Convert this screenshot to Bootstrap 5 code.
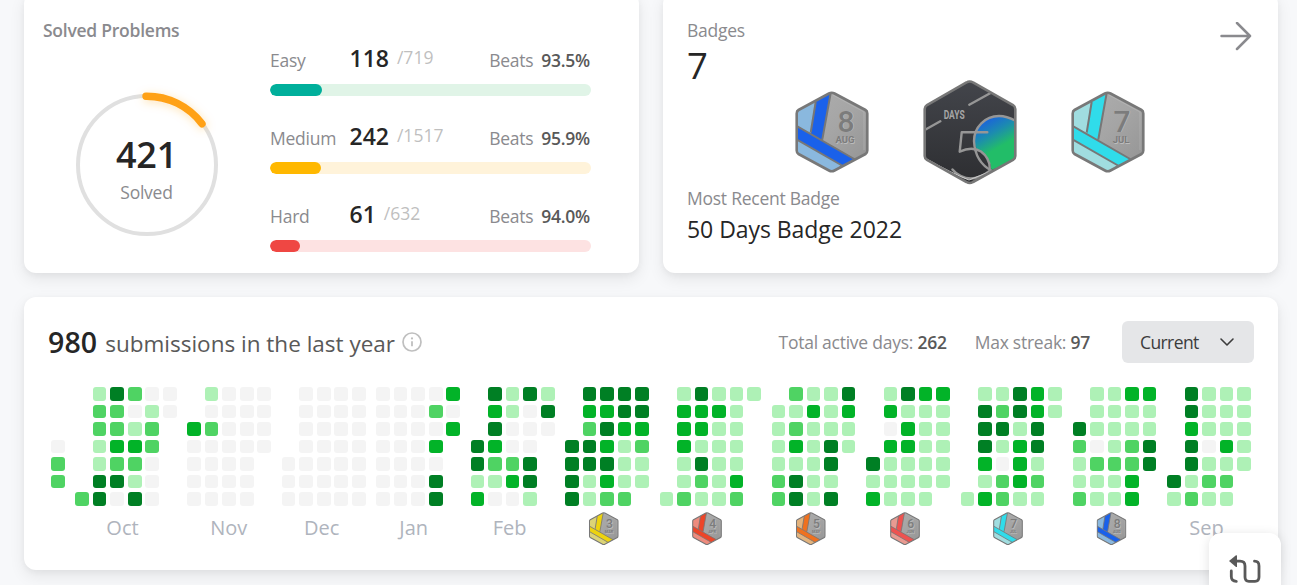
<!DOCTYPE html>
<html lang="en">
<head>
<meta charset="utf-8">
<meta name="viewport" content="width=device-width, initial-scale=1">
<title>Profile</title>
<link href="https://cdn.jsdelivr.net/npm/bootstrap@5.3.0/dist/css/bootstrap.min.css" rel="stylesheet">
<style>
body{background:#f7f8fa;font-family:"Open Sans","Noto Sans",sans-serif;color:#262626;overflow:hidden;height:585px}
main{margin-top:-8px;padding:0 19px 0 24px}
.panel{background:#fff;border:0;border-radius:12px;box-shadow:0 2px 6px rgba(0,0,0,.04),0 6px 16px rgba(0,0,0,.08)}
.top-row{grid-template-columns:1fr 1fr}
.top-panel{height:281px;min-width:0}
.muted{color:#8a8a8e}
.t18{font-size:17.5px;line-height:24px;letter-spacing:-.25px}
.solved{padding:26px 48px 0 19px}
.ring-box{width:144px;height:144px;margin:51px 0 0 32px}
.ring-text{inset:0;padding-top:40px;text-align:center}
.ring-num{font-size:36px;line-height:44px;font-weight:600;letter-spacing:-.2px;margin-left:-1px}
.ring-caption{margin:3px 0 0 -1px}
.levels{width:321px;padding-top:22px}
.level{margin-bottom:22px}
.level-head{height:36px;line-height:36px;margin-bottom:8px;padding-right:1px;font-size:17.5px;letter-spacing:-.25px}
.level-name{width:79.5px}
.level-num{font-size:23px;font-weight:600;letter-spacing:0;color:#262626}
.level-total{color:#bfbfbf;font-weight:500;margin-left:8px;letter-spacing:0;transform:translateY(-3px)}
.bar{height:12px;border-radius:6px}
.bar .progress-bar{border-radius:6px}
.strong-num{color:#595959;font-weight:600}
.badges{padding:26px 26px 0 24px}
.badge-count{font-size:36.5px;line-height:47px}
.medals{height:104px;margin:-9px 107px 2px 108px}
.recent{font-size:23px;line-height:38px;letter-spacing:-.05px}
.year{height:273px;margin-top:24px;padding:24px 24px 0}
.year-head{height:42px}
.year-num{font-size:28.5px;font-weight:600;letter-spacing:.1px}
.year-label{font-size:22.5px;color:#595959;margin-left:8px;position:relative;top:-1px}
.period{width:132px;height:42px;background:#e5e6e8;border:0;border-radius:6px;color:#3c3c3c;font-size:17.5px;letter-spacing:-.6px;padding:0 19px 0 18px}
.cal{margin:24px 0 0 3px;gap:10.65px}
.weeks{gap:3.92px}
.week{gap:3.92px}
.cell{width:13.65px;height:13.65px;border-radius:3px;flex:none}
.v0{background:#f4f4f4}.v1{background:#aef1b6}.v2{background:#4fd363}.v3{background:#02b328}.v4{background:#007f24}
.month-label{height:36px;margin-top:6px;font-size:20px;line-height:32px;color:#afb4bd;text-align:center}
.month-label svg{display:block;margin:1px auto 0}
.emboss{text-shadow:.8px .8px 0 #bcbcbc}
.fab{position:fixed;left:1209px;top:533px;width:72px;height:72px;border-radius:12px;background:#fff;box-shadow:0 2px 12px rgba(0,0,0,.12);padding:22px 0 0 20px}
</style>
</head>
<body>
<main>
  <div class="d-grid gap-4 top-row">
    <section class="card panel top-panel solved flex-row justify-content-between">
      <div class="flex-shrink-0">
        <div class="t18 muted fw-semibold">Solved Problems</div>
        <div class="ring-box position-relative">
          <svg width="144" height="144" viewBox="0 0 144 144" overflow="visible">
            <defs><filter id="glow" x="-50%" y="-50%" width="200%" height="200%"><feDropShadow dx="1" dy="2" stdDeviation="5" flood-color="#ffa116" flood-opacity=".3"/></filter></defs>
            <circle cx="72" cy="72" r="69" fill="none" stroke="#e0e0e0" stroke-width="4"/>
            <path d="M71 3.2A69 69 0 0 1 127 30.8" fill="none" stroke="#ffa116" stroke-width="7.4" stroke-linecap="round" filter="url(#glow)"/>
          </svg>
          <div class="ring-text position-absolute">
            <div class="ring-num">421</div>
            <div class="t18 muted ring-caption">Solved</div>
          </div>
        </div>
      </div>
      <div class="levels flex-shrink-0" id="levels"></div>
    </section>
    <section class="card panel top-panel badges">
      <div class="d-flex justify-content-between" style="height:24px">
        <div class="t18 muted">Badges</div>
        <svg class="mt-1" width="32" height="30" viewBox="0 0 32 30"><path d="M1.500 14H30M17 1L30 14L17 27" fill="none" stroke="#8a8a8e" stroke-width="2.500" stroke-linecap="round" stroke-linejoin="round"/></svg>
      </div>
      <div class="badge-count">7</div>
      <div class="medals d-flex align-items-center justify-content-between" id="medals"></div>
      <div class="t18 muted">Most Recent Badge</div>
      <div class="recent">50 Days Badge 2022</div>
    </section>
  </div>

  <section class="card panel year">
    <div class="year-head d-flex align-items-center">
      <div class="d-flex align-items-baseline"><span class="year-num">980</span><span class="year-label">submissions in the last year</span></div>
      <svg style="margin-left:7px" width="20" height="20" viewBox="0 0 20 20"><circle cx="10" cy="10" r="9" fill="none" stroke="#bfbfbf" stroke-width="1.700"/><path d="M10 9.200V14.300" stroke="#bfbfbf" stroke-width="1.800"/><circle cx="10" cy="6.400" r="1.100" fill="#bfbfbf"/></svg>
      <div class="t18 muted ms-auto">Total active days: <span class="strong-num">262</span></div>
      <div class="t18 muted" style="margin:0 32px 0 28px">Max streak: <span class="strong-num">97</span></div>
      <button class="btn period d-flex align-items-center justify-content-between">Current
        <svg width="16" height="10" viewBox="0 0 16 10"><path d="M2 2L8 8L14 2" fill="none" stroke="#3c3c3c" stroke-width="1.600" stroke-linecap="round" stroke-linejoin="round"/></svg>
      </button>
    </div>
    <div class="cal d-flex" id="cal"></div>
  </section>
</main>
<div class="fab">
  <svg width="34" height="34" viewBox="0 0 34 34"><path d="M0 6L7 0.300Q8 0 8 1V11.500Q8 12.400 7 12Z" fill="#595959"/><path d="M7 6.200H11Q16 6.200 16 11V22Q16 26.300 20 26.300H26Q30 26.300 30 22V11Q30 6.200 25.500 6.200M2.300 16V21.500Q2.300 26 7.300 26.300" fill="none" stroke="#595959" stroke-width="2.800" stroke-linecap="round"/></svg>
</div>
<script src="https://cdn.jsdelivr.net/npm/bootstrap@5.3.0/dist/js/bootstrap.bundle.min.js"></script>
<script>
// Difficulty rows: name, solved, total, beats, filled width in %, colour, track
document.getElementById('levels').innerHTML = [
  ['Easy','118','719','93.5%',16.2,'#00af9b','#e0f4e7'],
  ['Medium','242','1517','95.9%',15.9,'#ffb800','#fff3da'],
  ['Hard','61','632','94.0%',9.4,'#ef4743','#fde2e2']
].map(([n,s,t,b,w,c,k]) => `<div class="level">
  <div class="level-head d-flex align-items-baseline muted"><span class="level-name">${n}</span><span class="level-num">${s}</span><span class="level-total">/${t}</span><span class="ms-auto">Beats<span class="strong-num ms-2">${b}</span></span></div>
  <div class="progress bar" style="background:${k}"><div class="progress-bar" style="width:${w}%;background:${c}"></div></div></div>`).join('');

// Monthly medal: bright stripe, pale stripe, number, month
let uid = 0;
function medal(w, bright, pale, num, mon) {
  const id = 'm' + (uid++), hex = 'M36.700 1.800Q38.200 1.800 39.500 2.500L70.500 19Q72.300 20 72.300 22.500V59.500Q72.300 62 70.500 63L39.500 79.500Q36.700 81 34 79.500L3.500 63Q1.700 62 1.700 59.500V22.500Q1.700 20 3.500 19L34 2.500Q35.300 1.800 36.700 1.800Z';
  return `<svg width="${w}" height="${w*82/74}" viewBox="0 0 74 82"><defs><linearGradient id="${id}g" x1="0" y1="0" x2="1" y2="1"><stop offset="0" stop-color="#b0b0b0"/><stop offset=".5" stop-color="#a5a5a5"/><stop offset="1" stop-color="#929292"/></linearGradient><clipPath id="${id}"><path d="${hex}"/></clipPath></defs>
  <g clip-path="url(#${id})"><rect width="74" height="82" fill="url(#${id}g)"/>
  <path d="M0 0H21L15.700 43L0 35Z" fill="${pale}"/><path d="M20.700 10V0H36L27.300 50L15.700 43Z" fill="${bright}"/>
  <path d="M0 34L60 68L46 76L0 49Z" fill="${bright}"/><path d="M0 47.500L46 74L36 84L0 66Z" fill="${pale}"/>
  <path d="M20.700 11L15.700 41.500M35.700 2L27.300 48.500M1 34.500L60 68.500M1 48L47 74.500" fill="none" stroke="#777" stroke-width="2"/></g>
  <path d="${hex}" fill="none" stroke="#787878" stroke-width="2.600"/><path d="M38 4L69 21V59" fill="none" stroke="#d0d0d0" stroke-width=".6" opacity=".5"/>
  <g class="emboss" font-family="Roboto,sans-serif" text-anchor="middle" font-weight="500" fill="#7c7c7c"><text x="51" y="40.500" font-size="30">${num}</text><text x="50" y="52" font-size="9.500" font-weight="700">${mon}</text></g></svg>`;
}
const fifty = `<svg width="94" height="105" viewBox="0 0 94 105"><defs>
  <linearGradient id="fg" x1="0" y1="0" x2=".45" y2="1"><stop offset=".15" stop-color="#1b62dc"/><stop offset=".42" stop-color="#1c8bb0"/><stop offset=".7" stop-color="#22bd68"/></linearGradient>
  <linearGradient id="fb" x1="0" y1="0" x2="0" y2="1"><stop offset="0" stop-color="#43454b"/><stop offset="1" stop-color="#2d2e31"/></linearGradient>
  <path id="fh" d="M46.700 1.500Q48.500 1.500 50 2.500L90 25Q92.300 26.500 92.300 29V76Q92.300 78.500 90 80L50 102Q46.700 104 43.500 102L4 80Q1.700 78.500 1.700 76V29Q1.700 26.500 4 25L43.500 2.500Q45 1.500 46.700 1.500Z"/>
  <clipPath id="fc"><use href="#fh"/></clipPath></defs>
  <use href="#fh" fill="url(#fb)"/>
  <g clip-path="url(#fc)" fill="none" stroke="#969696" stroke-width="2.400" stroke-linecap="round" stroke-linejoin="round">
  <path d="M92 41Q84 36 76 36A25 25 0 0 0 51 61Q51 68 57 71Q67 77 68.500 90L94 80Z" fill="url(#fg)" stroke="none"/>
  <path d="M93 41Q84 36 76 36A25 25 0 0 0 51 61Q52 82 69 91"/>
  <path d="M46.300 24.700L68 12.700M1.700 50L17.300 41.300"/>
  <path d="M64.300 52.300H38.700L36.700 71.700Q49 66 58 71.500Q68 79 66.500 91Q51 103 38 96Q33 94 29.500 89.500"/>
  <path d="M2 78Q30 94 46 100L66 92" stroke="#ccc" stroke-width="1"/></g>
  <use href="#fh" fill="none" stroke="#777" stroke-width="2.600"/>
  <text x="20.700" y="38.500" font-family="Roboto,sans-serif" font-weight="700" font-size="12.500" textLength="21" lengthAdjust="spacingAndGlyphs" fill="#a5a5a5">DAYS</text></svg>`;
document.getElementById('medals').innerHTML =
  medal(74,'#1a61ea','#8ab8de','8','AUG') + fifty + medal(74,'#30dcea','#a0dde0','7','JUL');

// Calendar: one string per week, levels 0-4 from Sunday to Saturday, "." for no day
const Z = '0000000';
const months = [
  ['', 0, '...022.'],
  ['Oct', -3.5, '......2 1221144 4223240 2013214 0122000 00.....'],
  ['Nov', -0.5, `..30000 1020000 ${Z} ${Z} 0000...`],
  ['Dec', -2, `....000 ${Z} ${Z} ${Z} ${Z}`],
  ['Jan', -4.5, `${Z} ${Z} ${Z} 0203044 303....`],
  ['Feb', -3, '...4413 4343210 1100230 4000441 140....'],
  [['#edd30f','#dcd477','3','MAR'], -3.2, '...4444 4324411 4343432 4431112 443211.'],
  [['#ed4528','#ee8b7d','4','APR'], -3, '......1 1333112 4331421 1311111 1111132 1......'],
  [['#ef711f','#e3b37d','5','MAY'], -3.2, '.111122 2123144 1311111 1114414 4311...'],
  [['#ee5250','#e99a91','6','JUN'], -3, '....413 1303111 4133111 3111111 311111.'],
  [['#30dcea','#a0dde0','7','JUL'], -3, '......1 1444313 1241022 4413331 3344121 11.....'],
  [['#1a61ea','#8ab8de','8','AUG'], -3.5, '..42112 1110211 1111211 3112233 31144..'],
  ['Sep', -2.5, '.....41 4434412 1110121 1113121 11111..']
];
document.getElementById('cal').innerHTML = months.map(([label, dx, data]) =>
  `<div><div class="weeks d-flex">${data.split(' ').map(w => `<div class="week d-flex flex-column">${[...w].map(c => `<i class="cell ${c === '.' ? '' : 'v' + c}"></i>`).join('')}</div>`).join('')}</div>
  <div class="month-label" style="transform:translateX(${dx}px)">${Array.isArray(label) ? medal(30, ...label) : label}</div></div>`).join('');
</script>
</body>
</html>
